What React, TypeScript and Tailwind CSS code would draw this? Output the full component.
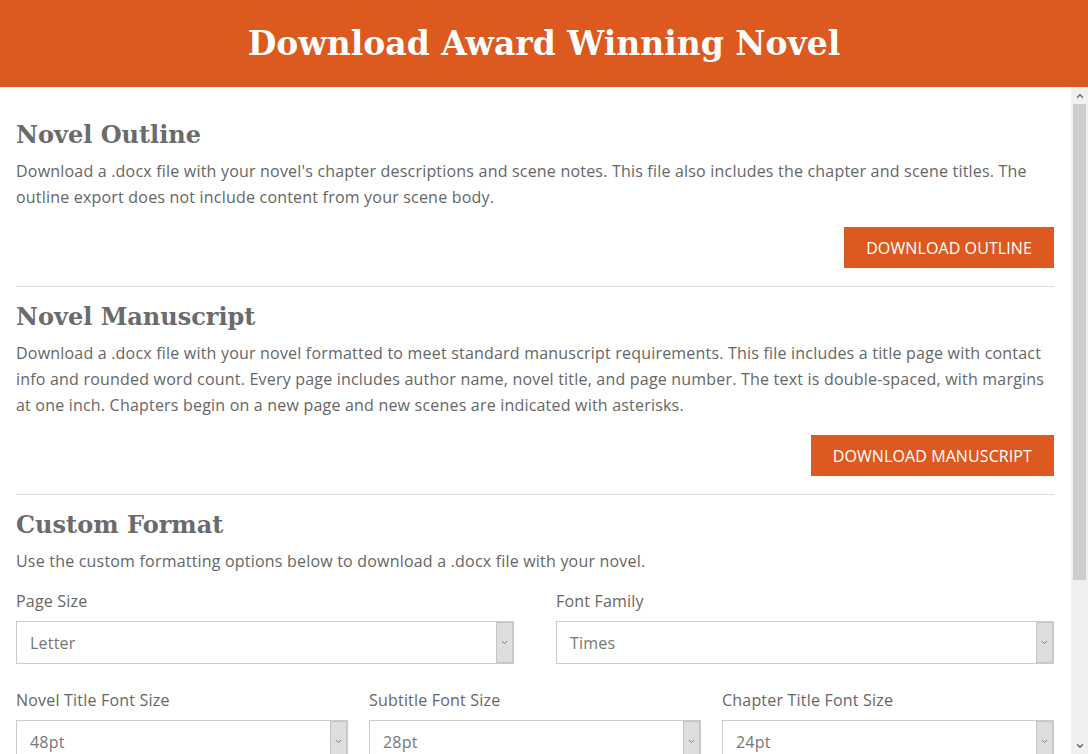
import { ChevronDown, ChevronUp } from 'lucide-react';

const sans = "font-['Open_Sans',sans-serif] tracking-[0.2px]";
const serif = "font-['DejaVu_Serif',Georgia,serif]";

function FakeSelect({ value }: { value: string }) {
  return (
    <div className="flex h-[43px] items-stretch border border-[#cccccc] bg-white">
      <div className="flex flex-1 items-center pl-[13px] text-[16px] text-[#777777]">{value}</div>
      <div className="flex w-[17px] items-center justify-center border border-[#c4c4c4] bg-[#dedede]">
        <ChevronDown className="h-[9px] w-[9px] text-[#707070]" strokeWidth={2.5} />
      </div>
    </div>
  );
}

function Field({ label, value }: { label: string; value: string }) {
  return (
    <div className="flex flex-col gap-[7px]">
      <label className="leading-[26px]">{label}</label>
      <FakeSelect value={value} />
    </div>
  );
}

function Button({ children }: { children: string }) {
  return (
    <div className="mt-[17px] flex justify-end">
      <button className="h-[41px] bg-[#dc5a20] px-[22px] text-[16px] uppercase tracking-[0.1px] text-white">{children}</button>
    </div>
  );
}

export default function App() {
  return (
    <div className={`flex h-[754px] flex-col overflow-hidden bg-white ${sans}`}>
      {/* Header */}
      <header className="flex h-[87px] shrink-0 items-center justify-center bg-[#dc5a20]">
        <h1 className={`${serif} text-[33px] font-bold tracking-normal text-white`}>Download Award Winning Novel</h1>
      </header>

      <div className="flex min-h-0 flex-1">
        {/* Content */}
        <main className="flex-1 overflow-hidden pl-4 pr-[17px] pt-[33px] text-[16px] text-[#666666]">
          <section>
            <h2 className={`${serif} text-[24px] font-bold leading-[30px] tracking-normal text-[#6b6b6b]`}>Novel Outline</h2>
            <p className="mt-2 leading-[26px]">
              Download a .docx file with your novel's chapter descriptions and scene notes. This file also includes the chapter and scene titles. The outline export does not include content from your scene body.
            </p>
            <Button>Download Outline</Button>
          </section>

          <hr className="mt-[18px] border-t border-[#dddddd]" />

          <section className="pt-[15px]">
            <h2 className={`${serif} text-[24px] font-bold leading-[30px] tracking-normal text-[#6b6b6b]`}>Novel Manuscript</h2>
            <p className="mt-2 leading-[26px]">
              Download a .docx file with your novel formatted to meet standard manuscript requirements. This file includes a title page with contact info and rounded word count. Every page includes author name, novel title, and page number. The text is double-spaced, with margins at one inch. Chapters begin on a new page and new scenes are indicated with asterisks.
            </p>
            <Button>Download Manuscript</Button>
          </section>

          <hr className="mt-[18px] border-t border-[#dddddd]" />

          <section className="pt-[15px]">
            <h2 className={`${serif} text-[24px] font-bold leading-[30px] tracking-normal text-[#6b6b6b]`}>Custom Format</h2>
            <p className="mt-2 leading-[26px]">Use the custom formatting options below to download a .docx file with your novel.</p>

            <div className="mt-[14px] grid grid-cols-2 gap-x-[42px]">
              <Field label="Page Size" value="Letter" />
              <Field label="Font Family" value="Times" />
            </div>

            <div className="mt-[23px] grid grid-cols-3 gap-x-[21px]">
              <Field label="Novel Title Font Size" value="48pt" />
              <Field label="Subtitle Font Size" value="28pt" />
              <Field label="Chapter Title Font Size" value="24pt" />
            </div>
          </section>
        </main>

        {/* Scrollbar */}
        <div className="flex w-[17px] shrink-0 flex-col bg-[#f0f0f0]">
          <div className="flex h-[17px] items-center justify-center">
            <ChevronUp className="h-[10px] w-[10px] text-[#606060]" strokeWidth={3} />
          </div>
          <div className="mx-[2px] h-[476px] bg-[#cdcdcd]" />
          <div className="flex-1" />
          <div className="flex h-[17px] items-center justify-center">
            <ChevronDown className="h-[10px] w-[10px] text-[#606060]" strokeWidth={3} />
          </div>
        </div>
      </div>
    </div>
  );
}
